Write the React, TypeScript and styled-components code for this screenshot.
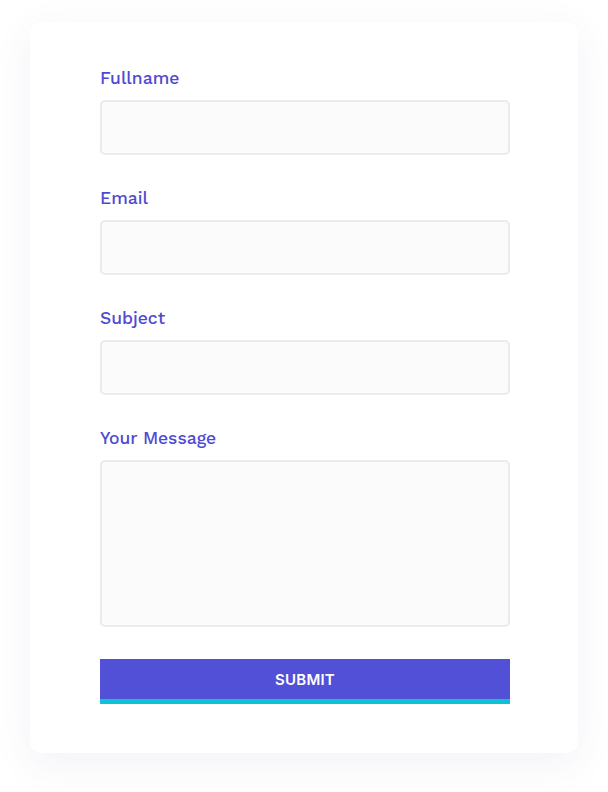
import styled, { createGlobalStyle } from "styled-components";

const GlobalStyle = createGlobalStyle`
  body {
    margin: 0;
    background: #ffffff;
    font-family: "Work Sans", Inter, "Noto Sans", sans-serif;
  }
`;

const fields = [
  { id: "fullname", label: "Fullname" },
  { id: "email", label: "Email" },
  { id: "subject", label: "Subject" },
];

export default function App() {
  return (
    <>
      <GlobalStyle />
      <Page>
        <Card>
          <Form onSubmit={(e) => e.preventDefault()}>
            {fields.map((f) => (
              <Field key={f.id}>
                <Label htmlFor={f.id}>{f.label}</Label>
                <Input id={f.id} type="text" />
              </Field>
            ))}
            <Field>
              <Label htmlFor="message">Your Message</Label>
              <TextArea id="message" />
            </Field>
            <SubmitButton type="submit">SUBMIT</SubmitButton>
          </Form>
        </Card>
      </Page>
    </>
  );
}

const Page = styled.div`
  padding: 22px 30px 39px;
`;

const Card = styled.div`
  background: #ffffff;
  border-radius: 12px;
  box-shadow: 0 10px 40px rgba(70, 70, 140, 0.07);
  padding: 44px 68px 49px 70px;
`;

const Form = styled.form`
  display: flex;
  flex-direction: column;
  gap: 31px;
`;

const Field = styled.div`
  display: flex;
  flex-direction: column;
`;

const Label = styled.label`
  font-size: 17.5px;
  font-weight: 500;
  line-height: 24px;
  color: #5049d4;
  margin-bottom: 10px;
`;

const Input = styled.input`
  box-sizing: border-box;
  height: 55px;
  width: 100%;
  border: 2px solid #ebebeb;
  border-radius: 5px;
  background: #fbfbfb;
  outline: none;
`;

const TextArea = styled.textarea`
  box-sizing: border-box;
  height: 167px;
  width: 100%;
  border: 2px solid #ebebeb;
  border-radius: 5px;
  background: #fbfbfb;
  outline: none;
  resize: none;
`;

const SubmitButton = styled.button`
  margin-top: 1px;
  height: 45px;
  border: none;
  border-bottom: 5px solid #0dc3d2;
  background: #5150d6;
  color: #ffffff;
  font-family: Inter, "Noto Sans", sans-serif;
  font-weight: 600;
  font-size: 15px;
  letter-spacing: 0.2px;
  cursor: pointer;
`;
